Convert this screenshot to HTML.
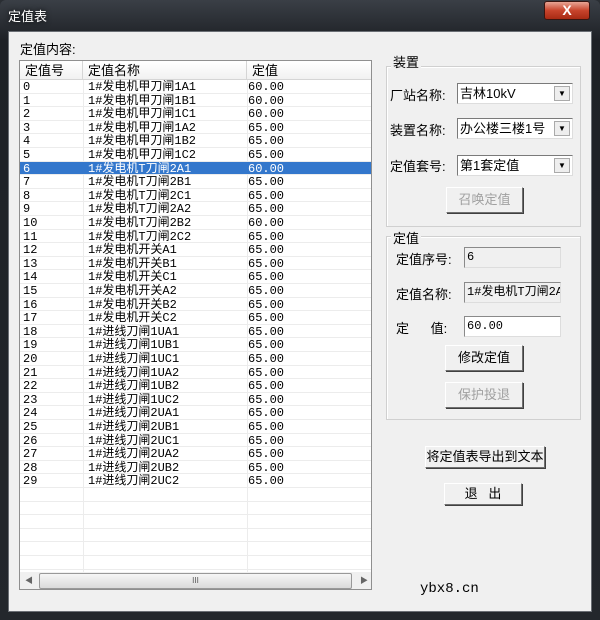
<!DOCTYPE html>
<html><head><meta charset="utf-8"><style>
*{margin:0;padding:0;box-sizing:border-box}
body{width:600px;height:620px;overflow:hidden;background:#2a2e33;font-family:"Liberation Sans","Noto Sans CJK SC",sans-serif;font-size:12px;color:#000;position:relative}
.frame{position:absolute;left:0;top:0;width:600px;height:620px;background:linear-gradient(#3a3f46,#1e2126 40px,#23272c);border-radius:6px 6px 0 0}
.title{position:absolute;left:8px;top:6px;color:#fff;font-size:13px;text-shadow:0 0 6px #000}
.close{position:absolute;left:544px;top:1px;width:46px;height:19px;border:1px solid #3a1510;border-radius:3px;background:linear-gradient(#e8a595,#c8442c 50%,#a82a14);color:#fff;font-weight:bold;text-align:center;font-size:14px;line-height:17px}
.client{position:absolute;left:8px;top:31px;width:584px;height:581px;background:#f0f0f0;border:1px solid #6a6e74}
.a{position:absolute}
.list{position:absolute;left:19px;top:60px;width:353px;height:530px;background:#fff;border:1px solid #8f8f8f;overflow:hidden}
.hdr{position:absolute;left:0;top:0;height:19px;width:353px;background:linear-gradient(#fff,#f1f1f1);border-bottom:1px solid #d5d5d5}
.hc{position:absolute;top:0;height:19px;line-height:19px;padding-left:5px;font-size:13px;border-right:1px solid #d5d5d5}
.row{position:absolute;left:0;width:353px;height:13.6px;border-bottom:1px solid #ececec;font-family:"Liberation Mono","Noto Sans CJK SC",monospace;font-size:12px;line-height:13px;white-space:nowrap}
.row span{position:absolute;top:1px}
.c1{left:3px}.c2{left:68px}.c3{left:228px}
.sel{background:#3377cc;color:#fff}
.vl{position:absolute;top:19px;width:1px;height:492px;background:#ececec}
.sb{position:absolute;left:0;top:511px;width:351px;height:18px;background:#f0f0f0}
.thumb{position:absolute;left:19px;top:1px;width:313px;height:16px;border:1px solid #999;border-radius:2px;background:linear-gradient(#f6f6f6,#dadada);text-align:center;font-size:8px;line-height:14px;color:#555}
.grp{position:absolute;border:1px solid #d0d0d0;box-shadow:inset 1px 1px 0 #fff}
.gl{position:absolute;background:#f0f0f0;padding:0 2px;font-size:13px}
.lbl{position:absolute;font-size:13px}
.combo{position:absolute;width:116px;height:21px;background:#fff;border:1px solid #7a7a7a;border-right-color:#ddd;border-bottom-color:#ddd;font-size:13px;line-height:19px;padding-left:2px}
.combo i{position:absolute;right:2px;top:2px;width:16px;height:15px;background:#eee;border:1px solid #aaa;font-style:normal;font-size:8px;text-align:center;line-height:14px}
.btn{position:absolute;height:26px;background:#f0f0f0;border:1px solid #fff;border-right-color:#707070;border-bottom-color:#707070;box-shadow:1px 1px 0 #404040;text-align:center;font-size:13px;line-height:24px}
.dis{color:#a0a0a0}
.edit{position:absolute;width:97px;height:21px;border:1px solid #8a8a8a;border-right-color:#ddd;border-bottom-color:#ddd;font-size:12px;line-height:19px;padding-left:2px;font-family:"Liberation Mono","Noto Sans CJK SC",monospace;overflow:hidden;white-space:nowrap}
</style></head><body>
<div class="frame"></div>
<div class="title">定值表</div>
<div class="close">X</div>
<div class="client"></div>
<div class="lbl" style="left:20px;top:39px">定值内容:</div>
<div class="list">
<div class="hdr"><div class="hc" style="left:0;width:63px">定值号</div><div class="hc" style="left:63px;width:164px">定值名称</div><div class="hc" style="left:227px;width:126px;border:none">定值</div></div>
<div class="vl" style="left:63px"></div><div class="vl" style="left:227px"></div>
<div class="row" style="top:19px"><span class="c1">0</span><span class="c2">1#发电机甲刀闸1A1</span><span class="c3">60.00</span></div>
<div class="row" style="top:32.6px"><span class="c1">1</span><span class="c2">1#发电机甲刀闸1B1</span><span class="c3">60.00</span></div>
<div class="row" style="top:46.2px"><span class="c1">2</span><span class="c2">1#发电机甲刀闸1C1</span><span class="c3">60.00</span></div>
<div class="row" style="top:59.8px"><span class="c1">3</span><span class="c2">1#发电机甲刀闸1A2</span><span class="c3">65.00</span></div>
<div class="row" style="top:73.4px"><span class="c1">4</span><span class="c2">1#发电机甲刀闸1B2</span><span class="c3">65.00</span></div>
<div class="row" style="top:87px"><span class="c1">5</span><span class="c2">1#发电机甲刀闸1C2</span><span class="c3">65.00</span></div>
<div class="row sel" style="top:100.6px"><span class="c1">6</span><span class="c2">1#发电机T刀闸2A1</span><span class="c3">60.00</span></div>
<div class="row" style="top:114.2px"><span class="c1">7</span><span class="c2">1#发电机T刀闸2B1</span><span class="c3">65.00</span></div>
<div class="row" style="top:127.8px"><span class="c1">8</span><span class="c2">1#发电机T刀闸2C1</span><span class="c3">65.00</span></div>
<div class="row" style="top:141.4px"><span class="c1">9</span><span class="c2">1#发电机T刀闸2A2</span><span class="c3">65.00</span></div>
<div class="row" style="top:155px"><span class="c1">10</span><span class="c2">1#发电机T刀闸2B2</span><span class="c3">60.00</span></div>
<div class="row" style="top:168.6px"><span class="c1">11</span><span class="c2">1#发电机T刀闸2C2</span><span class="c3">65.00</span></div>
<div class="row" style="top:182.2px"><span class="c1">12</span><span class="c2">1#发电机开关A1</span><span class="c3">65.00</span></div>
<div class="row" style="top:195.8px"><span class="c1">13</span><span class="c2">1#发电机开关B1</span><span class="c3">65.00</span></div>
<div class="row" style="top:209.4px"><span class="c1">14</span><span class="c2">1#发电机开关C1</span><span class="c3">65.00</span></div>
<div class="row" style="top:223px"><span class="c1">15</span><span class="c2">1#发电机开关A2</span><span class="c3">65.00</span></div>
<div class="row" style="top:236.6px"><span class="c1">16</span><span class="c2">1#发电机开关B2</span><span class="c3">65.00</span></div>
<div class="row" style="top:250.2px"><span class="c1">17</span><span class="c2">1#发电机开关C2</span><span class="c3">65.00</span></div>
<div class="row" style="top:263.8px"><span class="c1">18</span><span class="c2">1#进线刀闸1UA1</span><span class="c3">65.00</span></div>
<div class="row" style="top:277.4px"><span class="c1">19</span><span class="c2">1#进线刀闸1UB1</span><span class="c3">65.00</span></div>
<div class="row" style="top:291px"><span class="c1">20</span><span class="c2">1#进线刀闸1UC1</span><span class="c3">65.00</span></div>
<div class="row" style="top:304.6px"><span class="c1">21</span><span class="c2">1#进线刀闸1UA2</span><span class="c3">65.00</span></div>
<div class="row" style="top:318.2px"><span class="c1">22</span><span class="c2">1#进线刀闸1UB2</span><span class="c3">65.00</span></div>
<div class="row" style="top:331.8px"><span class="c1">23</span><span class="c2">1#进线刀闸1UC2</span><span class="c3">65.00</span></div>
<div class="row" style="top:345.4px"><span class="c1">24</span><span class="c2">1#进线刀闸2UA1</span><span class="c3">65.00</span></div>
<div class="row" style="top:359px"><span class="c1">25</span><span class="c2">1#进线刀闸2UB1</span><span class="c3">65.00</span></div>
<div class="row" style="top:372.6px"><span class="c1">26</span><span class="c2">1#进线刀闸2UC1</span><span class="c3">65.00</span></div>
<div class="row" style="top:386.2px"><span class="c1">27</span><span class="c2">1#进线刀闸2UA2</span><span class="c3">65.00</span></div>
<div class="row" style="top:399.8px"><span class="c1">28</span><span class="c2">1#进线刀闸2UB2</span><span class="c3">65.00</span></div>
<div class="row" style="top:413.4px"><span class="c1">29</span><span class="c2">1#进线刀闸2UC2</span><span class="c3">65.00</span></div>
<div class="row" style="top:427px"></div><div class="row" style="top:440.6px"></div><div class="row" style="top:454.2px"></div><div class="row" style="top:467.8px"></div><div class="row" style="top:481.4px"></div><div class="row" style="top:495px"></div>
<div class="sb"><span class="a" style="left:5px;top:3px;font-size:8px;color:#666">◀</span><div class="thumb">III</div><span class="a" style="left:340px;top:3px;font-size:8px;color:#666">▶</span></div>
</div>

<div class="grp" style="left:386px;top:66px;width:195px;height:161px"></div>
<div class="gl" style="left:391px;top:52px">装置</div>
<div class="lbl" style="left:390px;top:85px">厂站名称:</div>
<div class="combo" style="left:457px;top:83px">吉林10kV<i>▼</i></div>
<div class="lbl" style="left:390px;top:120px">装置名称:</div>
<div class="combo" style="left:457px;top:118px">办公楼三楼1号<i>▼</i></div>
<div class="lbl" style="left:390px;top:156px">定值套号:</div>
<div class="combo" style="left:457px;top:155px">第1套定值<i>▼</i></div>
<div class="btn dis" style="left:446px;top:187px;width:77px">召唤定值</div>

<div class="grp" style="left:386px;top:236px;width:195px;height:184px"></div>
<div class="gl" style="left:391px;top:228px">定值</div>
<div class="lbl" style="left:396px;top:249px">定值序号:</div>
<div class="edit" style="left:464px;top:247px;background:#f0f0f0">6</div>
<div class="lbl" style="left:396px;top:284px">定值名称:</div>
<div class="edit" style="left:464px;top:282px;background:#f0f0f0">1#发电机T刀闸2A1</div>
<div class="lbl" style="left:396px;top:318px">定&nbsp;&nbsp;&nbsp;&nbsp;&nbsp;&nbsp;值:</div>
<div class="edit" style="left:464px;top:316px;background:#fff">60.00</div>
<div class="btn" style="left:445px;top:345px;width:78px">修改定值</div>
<div class="btn dis" style="left:445px;top:382px;width:78px">保护投退</div>

<div class="btn" style="left:425px;top:446px;width:120px;height:22px;line-height:20px">将定值表导出到文本</div>
<div class="btn" style="left:444px;top:483px;width:78px;height:22px;line-height:20px">退&nbsp;&nbsp;&nbsp;出</div>
<div class="a" style="left:420px;top:581px;font-family:'Liberation Mono',monospace;font-size:14px">ybx8.cn</div>
</body></html>
